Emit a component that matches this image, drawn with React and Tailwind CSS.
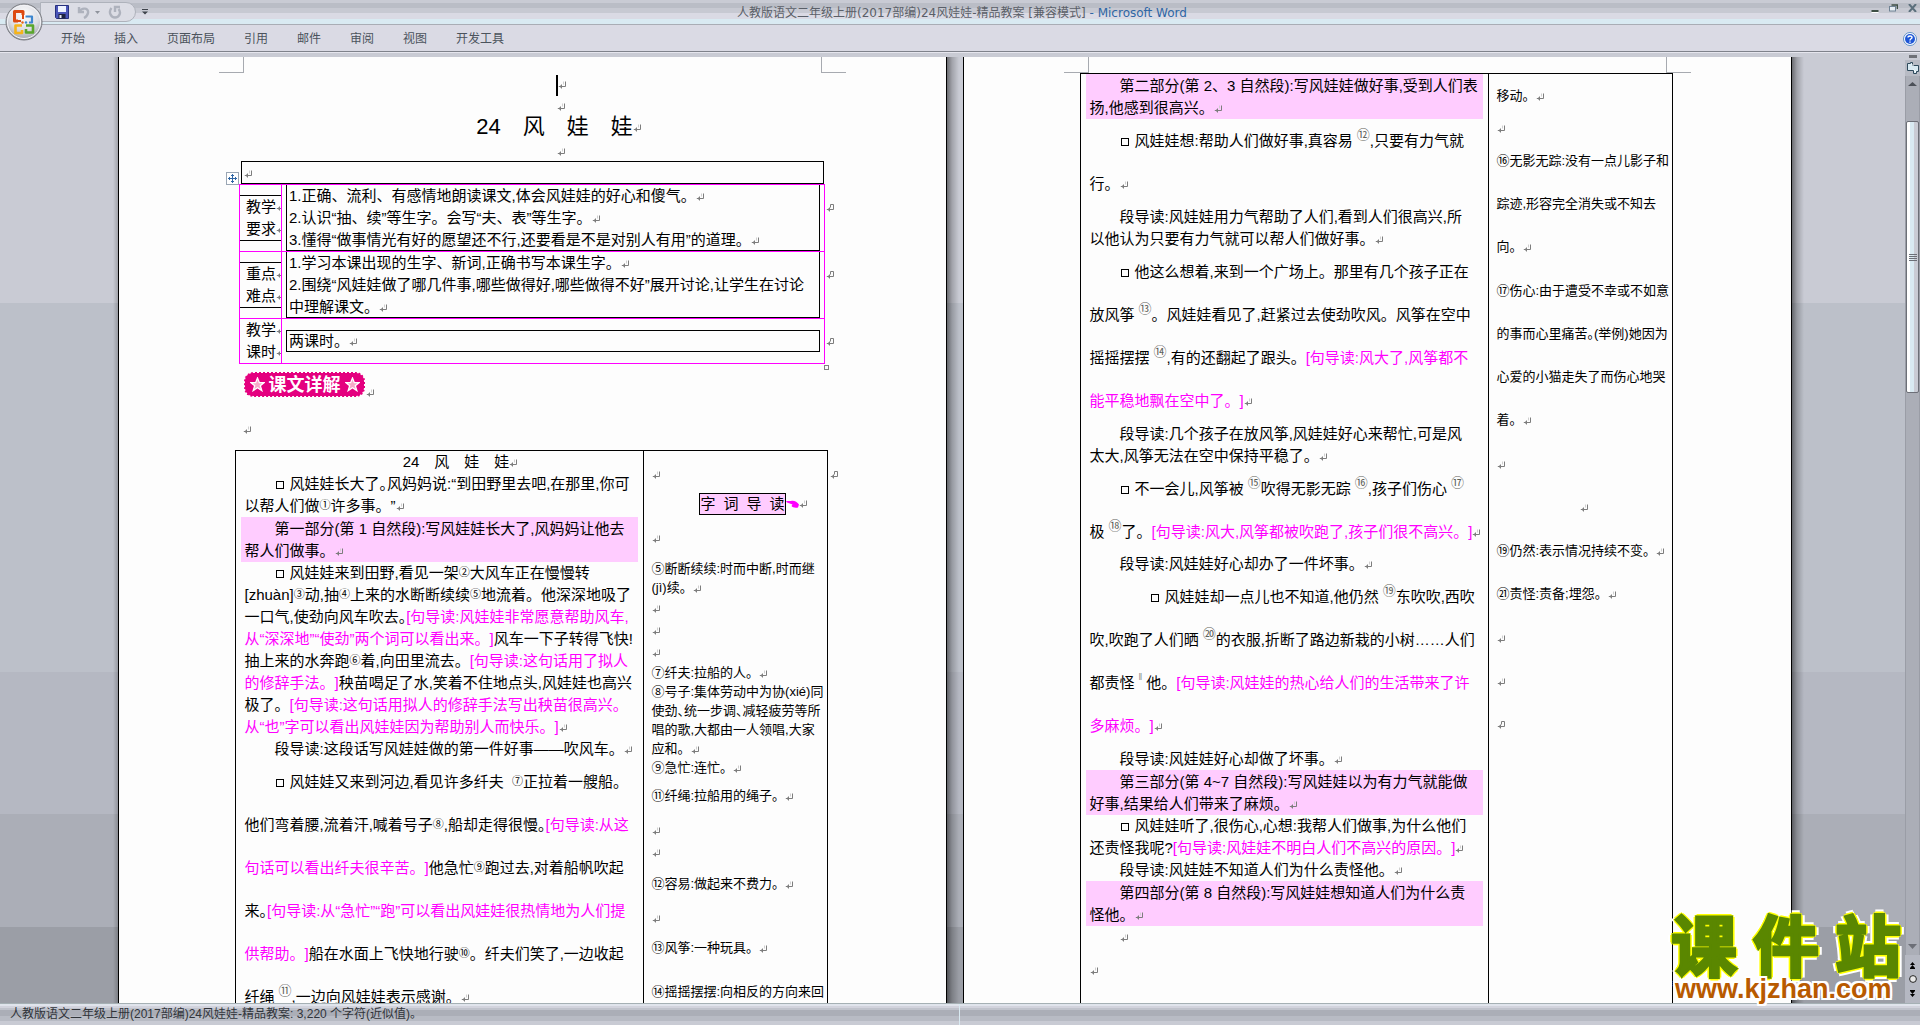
import React from "react";

/* ---------- inline marks ---------- */

function Mark({ className = "" }) {
  return (
    <svg aria-hidden="true" viewBox="0 0 8 8" className={`inline-block h-2 w-2 shrink-0 ${className}`} fill="none" stroke="#7d7d7d">
      <path d="M7.5 0.5V5.5H0.8M3.5 3.5V7.5M2.5 4.5V6.5" />
      <path d="M5.5 0.5V3.5" stroke="#d0d0d0" />
    </svg>
  );
}

function CellMark() {
  return (
    <svg aria-hidden="true" viewBox="0 0 8 8" className="inline-block h-2 w-2 shrink-0" fill="none" stroke="#7d7d7d">
      <path d="M4.5 3.5V0.5H7.5V5.5H0.8M3.5 3.5V7.5M2.5 4.5V6.5" />
    </svg>
  );
}

const Square = () => <span aria-hidden="true" className="mr-1.5 ml-px inline-block h-2 w-2 border border-black" />;
const Note = ({ children }) => <span className="text-[#ff00ff]">{children}</span>;
const Sup = ({ children }) => <span className="align-[2px] text-[11px] leading-none">{children}</span>;
const Half = ({ children }) => <span className="[font-feature-settings:'halt']">{children}</span>;
const Raised = ({ children }) => (
  <span className="ml-1 align-[7px] text-[13px] leading-none text-[#5d625b]">{children}</span>
);

/* Body lines: normal, double-spaced and side-note spacing */
const D = ({ indent, gap, children }) => (
  <p className={`leading-[22px] whitespace-nowrap ${indent ? "pl-[30px]" : ""} ${gap ? "pt-px" : ""}`}>{children}</p>
);
const W = ({ indent, deep, children }) => (
  <p className={`leading-[43px] whitespace-nowrap ${indent ? "pl-[30px]" : ""} ${deep ? "pl-[60px]" : ""}`}>{children}</p>
);
const N = ({ className = "", children }) => <p className={`leading-[19px] whitespace-nowrap ${className}`}>{children}</p>;
const G = ({ className = "", children }) => <p className={`leading-[22px] whitespace-nowrap ${className}`}>{children}</p>;
const NW = ({ gap, children }) => <p className={`leading-[43px] whitespace-nowrap ${gap ? "pt-px" : ""}`}>{children}</p>;

const Highlight = ({ children }) => <div className="-mx-1 bg-[#ffccff] px-1 pt-px">{children}</div>;

/* ---------- window chrome ---------- */

function OfficeLogo() {
  return (
    <svg viewBox="0 0 38 38" className="h-[38px] w-[38px]">
      <defs>
        <radialGradient id="orb" cx="50%" cy="30%" r="70%">
          <stop offset="0" stopColor="#ffffff" />
          <stop offset="0.6" stopColor="#dcdde3" />
          <stop offset="1" stopColor="#9fa2aa" />
        </radialGradient>
      </defs>
      <circle cx="19" cy="19" r="18" fill="url(#orb)" stroke="#77797f" strokeWidth="1" />
      <circle cx="19" cy="19" r="16.5" fill="none" stroke="#f4f4f8" />
      <g fill="none" strokeLinejoin="round">
        <path d="M13 18H9.5V8.5H18V12" stroke="#dd4a12" strokeWidth="3" />
        <path d="M18 12V16M13 18H16" stroke="#dd4a12" strokeWidth="2" />
        <path d="M20.5 13.5H27V19.5H24" stroke="#3d86cf" strokeWidth="2.2" />
        <path d="M17 22.5H10.5V30H17V27" stroke="#f5b31a" strokeWidth="2.6" />
        <path d="M21 22.5H28V29.5H21V26" stroke="#5aa62c" strokeWidth="2.6" />
      </g>
      <circle cx="17.5" cy="19.5" r="1.2" fill="#e8641b" />
      <circle cx="21" cy="19.5" r="1.2" fill="#3d86cf" />
    </svg>
  );
}

function TitleBar() {
  return (
    <header className="relative flex h-[25px] items-center border-b border-[#a9adb5] bg-[linear-gradient(to_bottom,#c9cbd4_0_3px,#babdc6_3px_8px,#c7c9d2_8px_13px,#dadae4_13px_19px,#d9eaf2_19px)]">
      <div className="absolute top-[3px] left-[5px] z-10">
        <button aria-label="Office 按钮" className="block rounded-full">
          <OfficeLogo />
        </button>
      </div>
      <div className="ml-10 flex h-5 w-[96px] items-center rounded-r-full border border-[#aeb2bb] bg-[#dcdde5] pl-3.5">
        <button aria-label="保存">
          <svg viewBox="0 0 14 14" className="h-3.5 w-3.5">
            <path d="M0.5 0.5H13.5V13.5H1.5L0.5 12.5Z" fill="#4a55b8" stroke="#27317d" />
            <rect x="3" y="1" width="8" height="6" fill="#eef3ff" />
            <rect x="3.5" y="9" width="7" height="4.5" fill="#1d2340" />
            <rect x="4.5" y="10" width="2" height="3" fill="#e4e8f4" />
          </svg>
        </button>
        <button aria-label="撤消" className="ml-2">
          <svg viewBox="0 0 14 14" className="h-3.5 w-3.5" fill="none" stroke="#aeb2bd" strokeWidth="2.4">
            <path d="M2 2V7H7M2.5 6.5C5 2 12 3 11 8C10.5 10.5 9 12 7 13" />
          </svg>
        </button>
        <svg aria-hidden="true" viewBox="0 0 5 3" className="ml-1 h-[3px] w-[5px]">
          <path d="M0 0H5L2.5 3Z" fill="#8f939c" />
        </svg>
        <button aria-label="恢复" className="ml-2">
          <svg viewBox="0 0 14 14" className="h-3.5 w-3.5" fill="none" stroke="#aeb2bd" strokeWidth="2.4">
            <path d="M3.5 3C0 7 3 12.5 7 12.5C11.5 12.5 13.5 7.5 10.5 4M7 7V2H12" />
          </svg>
        </button>
      </div>
      <button aria-label="自定义快速访问工具栏" className="ml-1.5">
        <svg viewBox="0 0 6 6" className="h-1.5 w-1.5" fill="#3f444c">
          <path d="M0 0H6V1H0ZM0 2.5H6L3 5.5Z" />
        </svg>
      </button>
      <h1 className="absolute inset-x-0 top-0.5 pl-1 text-center text-xs leading-[22px] font-normal whitespace-pre text-[#5a5f68] [font-family:'DejaVu_Sans','Noto_Sans_CJK_SC',sans-serif]">
        人教版语文二年级上册(2017部编)24风娃娃-精品教案 [兼容模式] <span className="text-[#2f66a5]">- Microsoft Word</span>
      </h1>
      <div className="z-10 ml-auto flex h-full items-start gap-2.5 pt-1 pr-[3px]">
        <button aria-label="最小化">
          <svg viewBox="0 0 8 9" className="h-[9px] w-2">
            <path d="M0.5 6H7.5V8H0.5Z" fill="#3f4f45" />
            <path d="M0.5 8H7.5V9H0.5Z" fill="#fff" />
          </svg>
        </button>
        <button aria-label="还原">
          <svg viewBox="0 0 9 8" className="h-2 w-[9px]" fill="none">
            <path d="M2.5 1H8.5V5" stroke="#3f4f45" strokeWidth="1.6" />
            <rect x="0.5" y="2.5" width="6" height="4.5" fill="#e8eef4" stroke="#6f8294" />
          </svg>
        </button>
        <button aria-label="关闭">
          <svg viewBox="0 0 9 8" className="h-2 w-[9px]" stroke="#5b6f7c" strokeWidth="2">
            <path d="M1 0L8 8M8 0L1 8" />
          </svg>
        </button>
      </div>
    </header>
  );
}

const tabs = ["开始", "插入", "页面布局", "引用", "邮件", "审阅", "视图", "开发工具"];

function Ribbon() {
  return (
    <nav className="flex h-[27px] items-center border-b border-[#7f828b] bg-[#dadae4] pt-0.5 pr-[3px] pl-[61px] text-xs text-[#4b535c]">
      <div className="flex gap-[29px]">
        {tabs.map((t) => (
          <button key={t}>{t}</button>
        ))}
      </div>
      <button aria-label="帮助" className="ml-auto">
        <svg viewBox="0 0 14 14" className="h-3.5 w-3.5">
          <circle cx="7" cy="7" r="6.5" fill="#fff" stroke="#5f8fc6" />
          <circle cx="7" cy="7" r="5" fill="#1f56d6" />
          <path d="M5 5.6C5 3.4 9.2 3.4 9 5.6C8.9 6.8 7 6.8 7 8.4M7 9.6V10.8" fill="none" stroke="#fff" strokeWidth="1.4" />
        </svg>
      </button>
    </nav>
  );
}

function ScrollBar() {
  return (
    <aside className="flex w-[15px] shrink-0 flex-col items-center bg-[#c9cbd4]">
      <div className="-mt-0.5 h-[3px] w-2 bg-[#6f7177]" />
      <button aria-label="标尺" className="mt-0.5 flex h-4 w-full items-center justify-center bg-[#b8bbc4]">
        <svg viewBox="0 0 12 12" className="h-3 w-3" fill="#d9eaf2" stroke="#2f4a5c">
          <path d="M0.5 1.5H3.5V0.5H5.5V3.5H11.5V9.5H9.5V11.5H6.5V8.5H0.5Z" />
          <path d="M4.5 2L6.5 4M6.5 7.5L9 10" stroke="#fff" />
        </svg>
      </button>
      <div className="flex w-full flex-1 flex-col items-center border-x border-[#9a9da6] bg-[#abaeb7]">
        <button aria-label="向上滚动" className="mt-1.5">
          <svg viewBox="0 0 9 4" className="h-1 w-[9px]">
            <path d="M4.5 0L9 4H0Z" fill="#4c5058" />
          </svg>
        </button>
        <div className="mt-[35px] flex h-[272px] w-full flex-col items-center justify-center gap-px rounded-xs border border-[#6c6f77] bg-[linear-gradient(to_right,#fff_0_3px,#d9eaf2_3px_7px,#c9cbd4_7px_11px,#f4f4f8_11px)]">
          <i className="h-px w-2 bg-[#6c6f77]" />
          <i className="h-px w-2 bg-[#6c6f77]" />
          <i className="h-px w-2 bg-[#6c6f77]" />
          <i className="h-px w-2 bg-[#6c6f77]" />
        </div>
        <button aria-label="向下滚动" className="mt-auto mb-1.5">
          <svg viewBox="0 0 9 5" className="h-[5px] w-[9px]">
            <path d="M4.5 5L9 0H0Z" fill="#6c6f77" />
          </svg>
        </button>
      </div>
      <div className="flex h-12 w-full flex-col items-center justify-evenly bg-[#b5b8c2]">
        <button aria-label="上一页">
          <svg viewBox="0 0 7 7" className="h-[7px] w-[7px]" fill="#000">
            <path d="M3.5 0L6 3H1ZM3.5 3L6 6H1ZM1 6H6V7H1Z" />
          </svg>
        </button>
        <button aria-label="选择浏览对象">
          <svg viewBox="0 0 8 8" className="h-2 w-2">
            <circle cx="4" cy="4" r="3.4" fill="#e8e8e8" stroke="#222" />
          </svg>
        </button>
        <button aria-label="下一页">
          <svg viewBox="0 0 7 7" className="h-[7px] w-[7px]" fill="#000">
            <path d="M1 0H6V1H1ZM3.5 4L6 1H1ZM3.5 7L6 4H1Z" />
          </svg>
        </button>
      </div>
    </aside>
  );
}

function PageCorners() {
  return (
    <div className="flex justify-between px-[100px]">
      <div className="h-4 w-[25px] border-r border-b border-[#a7aab0]" />
      <div className="h-4 w-[25px] border-b border-l border-[#a7aab0]" />
    </div>
  );
}

/* ---------- first page ---------- */

const Star = () => (
  <svg aria-hidden="true" viewBox="0 0 16 16" className="h-[15px] w-[15px] shrink-0">
    <path d="M8 1L10 6H15L11 9.2L12.6 14.5L8 11.4L3.4 14.5L5 9.2L1 6H6Z" fill="#f7a8c8" stroke="#fff" strokeWidth="1.4" />
  </svg>
);

function Badge() {
  return (
    <span className="inline-flex h-[25px] w-[121px] items-center justify-center gap-1 rounded-[9px] bg-[#e4007f] text-white outline-2 -outline-offset-1 outline-dotted outline-[#fdfdfd]">
      <Star />
      <span className="text-[18px] leading-none font-bold">课文详解</span>
      <Star />
    </span>
  );
}

const Label = ({ lines, ruled }) => (
  <td className="border border-[#ff00ff] p-0 align-middle">
    <div className={ruled ? "border-y border-black" : ""}>
      {lines.map((l) => (
        <p key={l} className="flex items-center overflow-hidden pl-1.5 leading-[22px] whitespace-nowrap">
          {l}
          <Mark />
        </p>
      ))}
    </div>
  </td>
);

const Goal = ({ full, children }) => (
  <>
    <td className="border border-[#ff00ff] px-[3px] py-0 align-middle">
      <div
        className={
          full
            ? "mx-px pl-[3px] shadow-[inset_1px_0_0_#000,inset_-1px_0_0_#000,inset_0_-1px_0_#000]"
            : "mx-px pl-[3px] shadow-[inset_0_0_0_1px_#000]"
        }
      >
        {children}
      </div>
    </td>
    <td className="p-0 pt-3.5 pl-px align-top leading-none">
      <CellMark />
    </td>
  </>
);

function PageOne() {
  return (
    <article className="flex-1 overflow-hidden border-x border-black bg-[#fdfdfd]">
      <PageCorners />
      <div className="pl-[52px]">
        <div className="flex h-6 items-center justify-center pl-1">
          <span className="h-[21px] w-0.5 bg-black" />
          <Mark />
        </div>
        <div className="flex h-5 items-center justify-center pl-1">
          <Mark />
        </div>
        <h2 className="text-center text-[22px] leading-5 font-normal whitespace-nowrap">
          24　风　娃　娃
          <Mark />
        </h2>
        <div className="flex h-6 items-center justify-center pt-1.5 pl-1">
          <Mark />
        </div>
      </div>

      <div className="relative mr-[113px] ml-[120px]">
        <div className="mr-[9px] ml-0.5 flex h-[23px] items-center border border-black pt-0.5 pl-0.5">
          <Mark />
        </div>
        <svg aria-hidden="true" viewBox="0 0 13 13" className="absolute top-[11px] -left-[13px] h-[13px] w-[13px]">
          <rect x="0.5" y="0.5" width="12" height="12" fill="#fff" stroke="#9aa6b4" />
          <path d="M6.5 2V11M2 6.5H11M5 3.5H8M5 9.5H8M3.5 5V8M9.5 5V8" stroke="#2f66a5" />
        </svg>
        <table className="w-full table-fixed border-collapse">
          <colgroup>
            <col className="w-[42px]" />
            <col />
            <col className="w-[9px]" />
          </colgroup>
          <tbody>
            <tr>
              <Label lines={["教学", "要求"]} ruled />
              <Goal full>
                <D>1.正确、流利、有感情地朗读课文,体会风娃娃的好心和傻气。<Mark /></D>
                <D>2.认识“抽、续”等生字。会写“夫、表”等生字。<Mark /></D>
                <D>3.懂得“做事情光有好的愿望还不行,还要看是不是对别人有用”的道理。<Mark /></D>
              </Goal>
            </tr>
            <tr>
              <Label lines={["重点", "难点"]} ruled />
              <Goal full>
                <D>1.学习本课出现的生字、新词,正确书写本课生字。<Mark /></D>
                <D>2.围绕“风娃娃做了哪几件事,哪些做得好,哪些做得不好”展开讨论,让学生在讨论</D>
                <D>中理解课文。<Mark /></D>
              </Goal>
            </tr>
            <tr>
              <Label lines={["教学", "课时"]} />
              <Goal>
                <D>两课时。<Mark /></D>
              </Goal>
            </tr>
          </tbody>
        </table>
      </div>

      <div className="flex justify-end pr-[117px] pb-0.5">
        <span className="mt-px h-[5px] w-[5px] border border-[#808080]" />
      </div>
      <div className="flex items-end pl-[125px]">
        <Badge />
        <Mark className="ml-px" />
      </div>
      <div className="mt-[22px] mb-[9px] flex h-[22px] items-center pl-[124px]">
        <Mark />
      </div>

      <table className="w-full table-fixed border-collapse">
        <colgroup>
          <col className="w-[116px]" />
          <col />
          <col className="w-[184px]" />
          <col className="w-[119px]" />
        </colgroup>
        <tbody>
          <tr className="align-top">
            <td className="p-0" />
            <td className="border border-black px-[9px] py-0">
              <p className="pl-[42px] text-center leading-[22px] whitespace-nowrap">
                24　风　娃　娃
                <Mark />
              </p>
              <D indent><Square />风娃娃长大了<Half>。</Half>风妈妈说:“到田野里去吧,在那里,你可</D>
              <D>以帮人们做<Sup>①</Sup>许多事。”<Mark /></D>
              <Highlight>
                <D indent>第一部分(第 1 自然段):写风娃娃长大了,风妈妈让他去</D>
                <D>帮人们做事。<Mark /></D>
              </Highlight>
              <D indent><Square />风娃娃来到田野,看见一架<Sup>②</Sup>大风车正在慢慢转</D>
              <D>[zhuàn]<Sup>③</Sup>动,抽<Sup>④</Sup>上来的水断断续续<Sup>⑤</Sup>地流着。他深深地吸了</D>
              <D>一口气,使劲向风车吹去<Half>。</Half><Note>[句导读:风娃娃非常愿意帮助风车,</Note></D>
              <D><Note>从“深深地”“使劲”两个词可以看出来。]</Note>风车一下子转得飞快!</D>
              <D>抽上来的水奔跑<Sup>⑥</Sup>着,向田里流去。<Note>[句导读:这句话用了拟人</Note></D>
              <D><Note>的修辞手法。]</Note>秧苗喝足了水,笑着不住地点头,风娃娃也高兴</D>
              <D>极了。<Note>[句导读:这句话用拟人的修辞手法写出秧苗很高兴。</Note></D>
              <D><Note>从“也”字可以看出风娃娃因为帮助别人而快乐。]</Note><Mark /></D>
              <D indent>段导读:这段话写风娃娃做的第一件好事——吹风车。<Mark /></D>
              <W indent><Square />风娃娃又来到河边,看见许多纤夫&nbsp; <Sup>⑦</Sup>正拉着一艘船。</W>
              <W>他们弯着腰,流着汗,喊着号子<Sup>⑧</Sup>,船却走得很慢<Half>。</Half><Note>[句导读:从这</Note></W>
              <W><Note>句话可以看出纤夫很辛苦。]</Note>他急忙<Sup>⑨</Sup>跑过去,对着船帆吹起</W>
              <W>来<Half>。</Half><Note>[句导读:从“急忙”“跑”可以看出风娃娃很热情地为人们提</Note></W>
              <W><Note>供帮助。]</Note>船在水面上飞快地行驶<Sup>⑩</Sup>。纤夫们笑了,一边收起</W>
              <W>纤绳<Raised>⑪</Raised>,一边向风娃娃表示感谢。<Mark /></W>
            </td>
            <td className="border border-black px-2 py-0 text-[13px]">
              <G className="mt-3"><Mark /></G>
              <div className="mt-2 flex items-center justify-center pl-9">
                <div className="flex h-[22px] items-center gap-2 border border-black bg-[#ffccff] text-[15px]">
                  <span>字</span>
                  <span>词</span>
                  <span>导</span>
                  <span>读</span>
                </div>
                <svg aria-hidden="true" viewBox="0 0 13 8" className="h-2 w-[13px]">
                  <path d="M0 1H5C8 0 11 2 13 4.5L12 7.5C9 8 6.5 7.5 5.5 6L6.5 4.5L1 2.5Z" fill="#ff00ff" />
                </svg>
                <Mark />
              </div>
              <G className="mt-3"><Mark /></G>
              <N className="mt-2.5">⑤断断续续:时而中断,时而继</N>
              <N>(jì)续。<Mark /></N>
              <G><Mark /></G>
              <G><Mark /></G>
              <G><Mark /></G>
              <N>⑦纤夫:拉船的人。<Mark /></N>
              <N>⑧号子:集体劳动中为协(xié)同</N>
              <N>使劲<Half>、</Half>统一步调<Half>、</Half>减轻疲劳等所</N>
              <N>唱的歌,大都由一人领唱,大家</N>
              <N>应和。<Mark /></N>
              <N>⑨急忙:连忙。<Mark /></N>
              <G className="mt-2">⑪纤绳:拉船用的绳子。<Mark /></G>
              <G className="mt-3"><Mark /></G>
              <G><Mark /></G>
              <G className="mt-2.5">⑫容易:做起来不费力。<Mark /></G>
              <G className="mt-3"><Mark /></G>
              <G className="mt-2">⑬风筝:一种玩具。<Mark /></G>
              <G className="mt-[22px]">⑭摇摇摆摆:向相反的方向来回</G>
            </td>
            <td className="p-0 pt-3 pl-0.5 leading-[22px]">
              <CellMark />
            </td>
          </tr>
        </tbody>
      </table>
    </article>
  );
}

/* ---------- second page ---------- */

function PageTwo() {
  return (
    <article className="flex-1 overflow-hidden border-x border-black bg-[#fdfdfd]">
      <PageCorners />
      <table className="w-full table-fixed border-collapse">
        <colgroup>
          <col className="w-[116px]" />
          <col />
          <col className="w-[184px]" />
          <col className="w-[119px]" />
        </colgroup>
        <tbody>
          <tr className="align-top">
            <td className="p-0" />
            <td className="border border-black px-[9px] py-0 pb-10">
              <Highlight>
                <D indent>第二部分(第 2、3 自然段):写风娃娃做好事,受到人们表</D>
                <D>扬,他感到很高兴。<Mark /></D>
              </Highlight>
              <W indent><Square />风娃娃想:帮助人们做好事,真容易<Raised>⑫</Raised>,只要有力气就</W>
              <W>行。<Mark /></W>
              <D indent gap>段导读:风娃娃用力气帮助了人们,看到人们很高兴,所</D>
              <D>以他认为只要有力气就可以帮人们做好事。<Mark /></D>
              <W indent><Square />他这么想着,来到一个广场上。那里有几个孩子正在</W>
              <W>放风筝<Raised>⑬</Raised>。风娃娃看见了,赶紧过去使劲吹风。风筝在空中</W>
              <W>摇摇摆摆<Raised>⑭</Raised>,有的还翻起了跟头。<Note>[句导读:风大了,风筝都不</Note></W>
              <W><Note>能平稳地飘在空中了。]</Note><Mark /></W>
              <D indent gap>段导读:几个孩子在放风筝,风娃娃好心来帮忙,可是风</D>
              <D>太大,风筝无法在空中保持平稳了。<Mark /></D>
              <W indent><Square />不一会儿,风筝被<Raised>⑮</Raised>吹得无影无踪<Raised>⑯</Raised>,孩子们伤心<Raised>⑰</Raised></W>
              <W>极<Raised>⑱</Raised>了。<Note>[句导读:风大,风筝都被吹跑了,孩子们很不高兴。]</Note><Mark /></W>
              <D indent>段导读:风娃娃好心却办了一件坏事。<Mark /></D>
              <W deep><Square />风娃娃却一点儿也不知道,他仍然<Raised>⑲</Raised>东吹吹,西吹</W>
              <W>吹,吹跑了人们晒<Raised>⑳</Raised>的衣服,折断了路边新栽的小树……人们</W>
              <W>都责怪<span className="mr-1 ml-1 align-[8px] text-[9px] leading-none text-[#8a8a8a]">‖</span>他。<Note>[句导读:风娃娃的热心给人们的生活带来了许</Note></W>
              <W><Note>多麻烦。]</Note><Mark /></W>
              <D indent gap>段导读:风娃娃好心却做了坏事。<Mark /></D>
              <Highlight>
                <D indent>第三部分(第 4~7 自然段):写风娃娃以为有力气就能做</D>
                <D>好事,结果给人们带来了麻烦。<Mark /></D>
              </Highlight>
              <D indent><Square />风娃娃听了,很伤心,心想:我帮人们做事,为什么他们</D>
              <D>还责怪我呢?<Note>[句导读:风娃娃不明白人们不高兴的原因。]</Note><Mark /></D>
              <D indent>段导读:风娃娃不知道人们为什么责怪他。<Mark /></D>
              <Highlight>
                <D indent>第四部分(第 8 自然段):写风娃娃想知道人们为什么责</D>
                <D>怪他。<Mark /></D>
              </Highlight>
              <D indent><Mark /></D>
              <W><Mark /></W>
            </td>
            <td className="border border-black px-2 py-0 text-[13px]">
              <NW>移动。<Mark /></NW>
              <G><Mark /></G>
              <NW>⑯无影无踪:没有一点儿影子和</NW>
              <NW>踪迹,形容完全消失或不知去</NW>
              <NW>向。<Mark /></NW>
              <NW gap>⑰伤心:由于遭受不幸或不如意</NW>
              <NW>的事而心里痛苦<Half>。</Half>(举例)她因为</NW>
              <NW>心爱的小猫走失了而伤心地哭</NW>
              <NW>着。<Mark /></NW>
              <NW gap><Mark /></NW>
              <p className="pl-2 text-center leading-[43px]"><Mark /></p>
              <NW gap>⑲仍然:表示情况持续不变。<Mark /></NW>
              <NW>㉑责怪:责备;埋怨。<Mark /></NW>
              <NW gap><Mark /></NW>
              <NW><Mark /></NW>
              <NW><CellMark /></NW>
            </td>
            <td className="p-0" />
          </tr>
        </tbody>
      </table>
    </article>
  );
}

/* ---------- site stamp ---------- */

function Stamp() {
  return (
    <div className="absolute right-[19px] bottom-0 z-20 w-[230px]">
      <div className="flex justify-between text-[66px] leading-[54px] font-bold text-[#5a8700] [-webkit-text-stroke:3px_#5a8700] [text-shadow:3px_0_#ff0,-3px_0_#ff0,0_3px_#ff0,0_-3px_#ff0,2px_2px_#ff0,-2px_2px_#ff0,2px_-2px_#ff0,-2px_-2px_#ff0,5px_0_#fff,-5px_0_#fff,0_5px_#fff,0_-5px_#fff]">
        <span>课</span>
        <span>件</span>
        <span>站</span>
      </div>
      <a
        href="#kjzhan"
        className="relative block pl-1 text-[27px] leading-7 font-bold text-[#b85a00] [text-shadow:2px_0_#fff,-2px_0_#fff,0_2px_#fff,0_-2px_#fff,2px_2px_#fff,-2px_2px_#fff,2px_-2px_#fff,-2px_-2px_#fff]"
      >
        www.kjzhan.com
      </a>
    </div>
  );
}

export default function App() {
  return (
    <div className="flex h-screen flex-col overflow-hidden bg-[#c9cbd4] text-[15px] text-black [font-family:'Liberation_Sans','Noto_Sans_CJK_SC',sans-serif] [text-spacing-trim:space-all]">
      <TitleBar />
      <Ribbon />
      <div className="h-[5px] shrink-0 border-t border-[#e6e6ee] bg-[#c9cbd4]" />
      <main className="relative flex min-h-0 flex-1">
        <div className="flex min-w-0 flex-1 overflow-hidden bg-[linear-gradient(to_bottom,#c9cbd4_0_26%,#bcc0c9_26%_65%,#b5b8c2_65%_80%,#abaeb7_80%_92%,#9b9ea6_92%)]">
          <div className="w-[118px] shrink-0 bg-[linear-gradient(to_left,#0003_0,#0000_5px)]" />
          <PageOne />
          <div className="w-4 shrink-0 bg-[linear-gradient(to_right,#0007_0,#0003_5px,#0000_12px)]" />
          <PageTwo />
          <div className="w-[113px] shrink-0 bg-[linear-gradient(to_right,#0007_0,#0003_5px,#0000_12px)]" />
        </div>
        <ScrollBar />
        <Stamp />
      </main>
      <footer className="flex h-[22px] shrink-0 items-center border-t border-[#a5b0b4] bg-[linear-gradient(to_bottom,#e0e4ec_0_2px,#d2d3dd_2px_4px,#c0c3cc_4px_6px,#abaeb7_6px_12px,#b8bbc4_12px_17px,#c9cbd4_17px)] text-xs text-[#30343a]">
        <p className="w-1/2 truncate border-r border-[#d9eaf2] pl-2.5 leading-[21px]">
          人教版语文二年级上册(2017部编)24风娃娃-精品教案: 3,220 个字符(近似值)。
        </p>
      </footer>
    </div>
  );
}
